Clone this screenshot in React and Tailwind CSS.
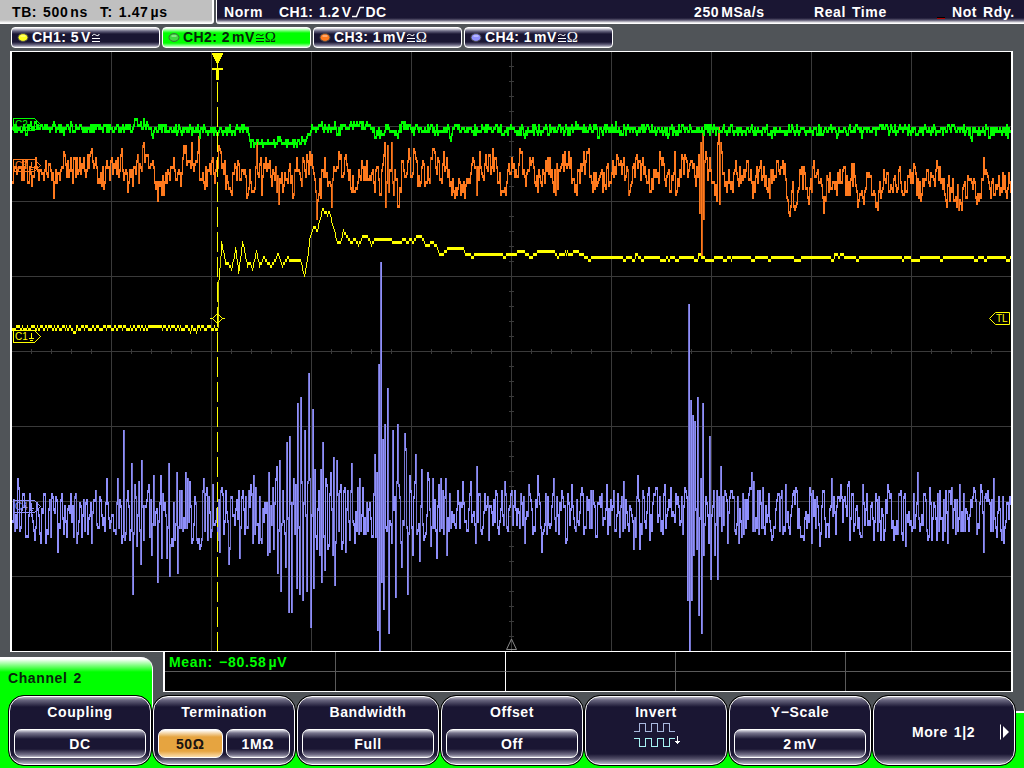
import React from "react";

const PLOT = { x0: 12, x1: 1011 };

// Small deterministic generator so every render draws the same noise floor.
function makeRandom(seed) {
  let s = seed;
  return () => {
    s = (s * 1664525 + 1013904223) % 4294967296;
    return s / 4294967296;
  };
}

const level = (y) => Math.round((y - 2.5) / 3);

// points: [x, y] pairs; fill(x, base, rand) gives the value of a column between them.
function sample(points, fill, seed) {
  const rand = makeRandom(seed);
  const out = [];
  let i = 0;
  for (let x = PLOT.x0; x < PLOT.x1; x++) {
    while (i < points.length - 2 && points[i + 1][0] <= x) i++;
    const [ax, ay] = points[i];
    const [bx, by] = points[i + 1];
    const t = Math.max(0, Math.min(1, (x - ax) / (bx - ax)));
    out.push(level(x === ax ? ay : fill(x, ay + (by - ay) * t, rand)));
  }
  return out;
}

// Quantiser flicker that keeps its value for a few columns.
function makeDither() {
  let left = 0;
  let value = 0;
  return (x, base, rand) => {
    if (x > 217 && x < 475) return base;
    if (left <= 0) {
      const r = rand();
      if (x <= 217) {
        value = value > 0 ? (r < 0.06 ? 3 : -1.5) : 1.5;
        if (x > 148 && x < 162) value = -1.5;
      } else {
        value = r < 0.32 ? 3 : r > 0.96 ? -3 : 0;
      }
      left = value === 0 ? 2 + Math.floor(rand() * 9) : 1 + Math.floor(rand() * 4);
    }
    left -= 1;
    return base + value * (x <= 217 || x > 585 ? 1 : 0.3);
  };
}

function bars(levels, overlap, dimOver) {
  let bright = "";
  let dim = "";
  for (let i = 0; i < levels.length; i++) {
    const cur = levels[i];
    const prev = i ? levels[i - 1] : cur;
    let top = Math.min(cur, prev);
    let bot = Math.max(cur, prev);
    if (!overlap && cur !== prev) {
      if (cur > prev) top += 1;
      else bot -= 1;
    }
    const h = (bot - top + 1) * 3;
    const seg = `M${PLOT.x0 + i} ${top * 3 + 1}h1v${h}h-1z`;
    if (h > dimOver && i % 2 === 0) dim += seg;
    else bright += seg;
  }
  return { bright, dim };
}

const CH1 = [
  [12, 328], [217, 328], [218, 282], [219, 270], [221, 242], [225, 263], [228, 263], [231, 270],
  [235, 248], [238, 272], [242, 242], [247, 266], [249, 262], [252, 269], [256, 251],
  [259, 266], [264, 257], [267, 263], [271, 266], [278, 254], [282, 266], [287, 258],
  [293, 261], [300, 261], [304, 275], [307, 257], [309, 240], [313, 227], [317, 230],
  [322, 209], [327, 215], [329, 212], [332, 225], [337, 242], [340, 242], [343, 231],
  [348, 239], [351, 242], [355, 239], [358, 245], [363, 236], [367, 236], [371, 245],
  [374, 239], [388, 239], [393, 242], [400, 242], [403, 239], [407, 242], [410, 239],
  [413, 242], [416, 236], [421, 236], [425, 245], [433, 243], [437, 248], [439, 254],
  [443, 254], [448, 248], [462, 248], [465, 253], [472, 257], [477, 254], [500, 254],
  [504, 257], [509, 254], [523, 252], [530, 257], [536, 253], [542, 252], [548, 250],
  [554, 252], [557, 257], [561, 254], [567, 252], [569, 255], [575, 251], [580, 254],
  [585, 257.3], [1012, 257.3],
];

const CH2 = [
  [12, 128], [132, 127], [134, 120], [137, 124], [150, 128], [152, 136], [155, 128],
  [230, 130], [243, 125], [247, 129], [249, 140], [265, 142], [290, 142], [303, 140],
  [308, 133], [313, 127], [333, 128], [334, 121], [336, 135], [340, 124], [368, 125],
  [372, 130], [382, 134], [385, 125], [396, 134], [402, 122], [410, 129], [448, 129],
  [449, 138], [452, 128], [522, 129], [524, 137], [527, 128], [596, 129], [597, 138], [599, 129],
  [666, 129], [667, 137], [669, 129], [835, 130], [836, 138], [838, 129], [860, 129], [861, 138],
  [863, 129], [969, 129], [970, 138], [972, 129], [987, 129], [988, 138], [990, 129], [1012, 129],
];

const CH3 = [
  [12, 182], [20, 168], [30, 174], [40, 170], [46, 172], [48, 165], [50, 170], [53, 198], [58, 172],
  [63, 151], [68, 175], [76, 158], [84, 170], [90, 151], [96, 166], [101, 186], [108, 168],
  [116, 172], [121, 148], [124, 172], [128, 183], [133, 168], [140, 166], [143, 142], [146, 154],
  [150, 165], [157, 201], [160, 182], [163, 195], [168, 172], [174, 170], [180, 186],
  [183, 145], [187, 162], [191, 143], [196, 160], [198, 136], [199, 180], [203, 182],
  [210, 173], [217, 168], [218, 145], [222, 165], [230, 192], [234, 164], [240, 178],
  [247, 195], [250, 182], [254, 188], [256, 142], [258, 176], [260, 157], [261, 195],
  [264, 168], [272, 170], [278, 202], [283, 184], [289, 163], [292, 198], [294, 170],
  [304, 171], [307, 160], [311, 155], [313, 172], [316, 217], [318, 195], [320, 198],
  [321, 170], [324, 157], [328, 182], [331, 207], [333, 168], [338, 151], [342, 175],
  [344, 157], [348, 180], [357, 183], [362, 167], [367, 180], [371, 172], [374, 192],
  [377, 168], [379, 193], [382, 165], [384, 142], [385, 205], [387, 145], [388, 190],
  [391, 142], [393, 194], [395, 180], [397, 207], [400, 192], [402, 162], [405, 176],
  [408, 148], [411, 175], [413, 148], [417, 186], [421, 168], [425, 182], [428, 178],
  [431, 157], [434, 152], [437, 157], [440, 180], [443, 151], [447, 175], [453, 190],
  [458, 180], [464, 198], [468, 178], [474, 168], [476, 193], [479, 151], [484, 165],
  [488, 155], [495, 158], [500, 194], [505, 193], [507, 170], [511, 157], [517, 175], [520, 151],
  [525, 185], [529, 158], [532, 158], [537, 190], [543, 172], [547, 157], [553, 190],
  [560, 166], [568, 151], [572, 180], [576, 195], [582, 163], [587, 151], [592, 190],
  [598, 180], [604, 184], [612, 162], [617, 157], [622, 165], [629, 190], [633, 163],
  [638, 160], [643, 172], [650, 192], [655, 170], [662, 157], [665, 185], [672, 180], [674, 153],
  [675, 195], [679, 170], [682, 157], [687, 175], [691, 160], [695, 184], [698, 156],
  [699, 213], [700, 142], [701, 253], [702, 130], [703, 219], [704, 160], [705, 151],
  [707, 180], [709, 157], [712, 182], [716, 201], [717, 142], [718, 128], [719, 204],
  [720, 142], [721, 151], [722, 172], [727, 182], [732, 192], [735, 160], [742, 180], [747, 160],
  [752, 198], [758, 170], [760, 160], [766, 188], [775, 175], [782, 160], [785, 178],
  [789, 214], [791, 192], [794, 208], [799, 170], [804, 174], [808, 204], [813, 160], [818, 182],
  [823, 211], [827, 178], [840, 182], [850, 180], [853, 163], [857, 205], [862, 197],
  [869, 175], [876, 204], [884, 178], [891, 188], [898, 170], [906, 190], [913, 163],
  [918, 198], [925, 180], [937, 166], [945, 201], [952, 180], [953, 200], [960, 204],
  [968, 178], [974, 182], [978, 201], [982, 180], [983, 157], [988, 182], [993, 195], [1000, 188],
  [1012, 190],
];

const CH4 = [
  [12, 520], [17, 478], [20, 528], [24, 505], [27, 535], [29, 493], [34, 540], [36, 503],
  [40, 541], [43, 493], [45, 541], [52, 496], [57, 550], [60, 500], [66, 535], [70, 493],
  [73, 535], [75, 493], [76, 543], [79, 502], [84, 530], [86, 500], [91, 543], [94, 500],
  [97, 528], [100, 499], [103, 518], [106, 478], [110, 522], [114, 531], [117, 478],
  [121, 543], [123, 430], [124, 540], [129, 538], [131, 463], [132, 592], [134, 485],
  [136, 544], [138, 482], [140, 562], [141, 460], [143, 540], [146, 500], [148, 485],
  [151, 555], [153, 475], [157, 580], [160, 475], [161, 558], [164, 502], [166, 558],
  [168, 463], [169, 576], [172, 545], [174, 538], [176, 472], [177, 573], [181, 490],
  [184, 527], [185, 472], [189, 482], [193, 525], [197, 543], [201, 540], [202, 490],
  [206, 487], [209, 512], [212, 485], [213, 525], [217, 538], [219, 550], [224, 520],
  [228, 562], [231, 496], [234, 525], [236, 500], [239, 558], [242, 490], [244, 534],
  [248, 490], [251, 495], [252, 543], [253, 475], [256, 525], [258, 541], [261, 541],
  [264, 502], [267, 555], [268, 473], [269, 552], [272, 487], [273, 549], [276, 466],
  [277, 573], [279, 460], [280, 591], [282, 490], [285, 565], [286, 442], [288, 612],
  [289, 436], [291, 612], [293, 480], [295, 484], [296, 588], [297, 403], [299, 594],
  [300, 397], [302, 600], [304, 430], [306, 591], [308, 373], [309, 480], [310, 627],
  [312, 409], [313, 588], [314, 469], [316, 549], [318, 490], [319, 555], [320, 469],
  [321, 582], [322, 442], [324, 570], [325, 478], [327, 549], [330, 472], [332, 555],
  [333, 457], [334, 585], [336, 460], [338, 530], [340, 484], [341, 549], [344, 488],
  [345, 552], [349, 540], [351, 463], [353, 525], [356, 530], [359, 478], [360, 531],
  [363, 534], [367, 530], [369, 502], [371, 537], [373, 495], [374, 454], [375, 537],
  [376, 472], [377, 630], [378, 364], [379, 651], [380, 262], [381, 580], [382, 439],
  [383, 609], [384, 424], [385, 526], [387, 388], [388, 633], [389, 520], [391, 543],
  [392, 430], [393, 510], [395, 597], [397, 424], [399, 496], [401, 567], [404, 433],
  [405, 448], [407, 594], [409, 475], [412, 555], [415, 454], [417, 530], [419, 561],
  [421, 469], [422, 525], [425, 534], [427, 472], [430, 546], [432, 478], [434, 500],
  [436, 558], [438, 485], [440, 478], [441, 528], [445, 478], [446, 555], [449, 493],
  [450, 528], [453, 515], [457, 490], [459, 528], [462, 481], [465, 520], [467, 530],
  [470, 481], [472, 515], [475, 543], [476, 466], [479, 493], [481, 534], [484, 495],
  [488, 540], [490, 505], [492, 523], [496, 495], [500, 510], [504, 481], [507, 530],
  [511, 490], [516, 525], [520, 495], [524, 543], [528, 484], [533, 528], [537, 475],
  [541, 552], [545, 493], [549, 528], [553, 478], [558, 534], [562, 496], [565, 543],
  [571, 484], [575, 530], [580, 493], [585, 528], [590, 490], [595, 536], [599, 498],
  [602, 523], [606, 484], [609, 525], [612, 505], [616, 515], [617, 493], [619, 537],
  [623, 482], [628, 531], [630, 508], [633, 549], [637, 475], [639, 549], [642, 490],
  [645, 528], [648, 487], [649, 540], [653, 493], [656, 487], [660, 531], [664, 484],
  [666, 515], [670, 489], [673, 516], [676, 502], [680, 522], [684, 487], [686, 497],
  [687, 598], [688, 304], [689, 651], [690, 400], [691, 598], [692, 415], [693, 553],
  [694, 421], [696, 549], [697, 397], [698, 615], [700, 478], [701, 633], [702, 403],
  [703, 555], [705, 496], [708, 543], [709, 436], [710, 579], [713, 490], [714, 555],
  [716, 490], [717, 579], [718, 497], [720, 466], [721, 531], [724, 490], [727, 543],
  [729, 496], [734, 531], [737, 496], [738, 543], [741, 537], [742, 493], [745, 528],
  [749, 487], [751, 472], [752, 531], [753, 482], [756, 528], [759, 492], [762, 487],
  [764, 534], [768, 493], [772, 537], [776, 500], [779, 531], [781, 490], [783, 528], [785, 484],
  [788, 528], [792, 493], [795, 487], [798, 510], [802, 537], [806, 528], [809, 487],
  [811, 543], [812, 490], [817, 505], [819, 546], [823, 490], [828, 537], [831, 478],
  [835, 534], [840, 484], [843, 500], [848, 481], [849, 540], [852, 493], [857, 528],
  [860, 537], [862, 484], [865, 510], [870, 505], [873, 540], [876, 500], [880, 540],
  [883, 540], [885, 500], [888, 490], [891, 528], [894, 528], [899, 493], [902, 540],
  [904, 493], [905, 546], [908, 511], [911, 531], [914, 528], [917, 472], [919, 531],
  [925, 499], [928, 537], [929, 487], [931, 540], [934, 505], [936, 540], [939, 490],
  [942, 538], [945, 490], [947, 543], [948, 490], [953, 510], [957, 529], [959, 484],
  [963, 493], [967, 519], [970, 500], [973, 487], [976, 534], [980, 484], [983, 552],
  [985, 493], [988, 500], [992, 531], [993, 478], [995, 528], [998, 496], [1000, 531],
  [1003, 543], [1006, 503], [1009, 496], [1012, 517],
];

const blueFill = (x, base, rand) => {
  const burst = x > 120 && x < 430 ? 30 : 23;
  return base * 0.2 + 514 * 0.8 + (rand() * 2 - 1) * burst;
};

const orangeFill = (x, base, rand) => {
  const centre = x < 560 ? 174 : x < 725 ? 176 : 184;
  return base * 0.7 + centre * 0.3 + (rand() * 2 - 1) * 14;
};

const greenFill = (x, base, rand) => base + 1 + (rand() + rand() - 1) * 6.5;

const TRACES = [
  { levels: sample(CH4, blueFill, 7), overlap: true, dimOver: 30, color: "#8f8ffb", dim: "#7474cc" },
  { levels: sample(CH3, orangeFill, 21), overlap: true, dimOver: 24, color: "#ff7a1e", dim: "#cf5f14" },
  { levels: sample(CH1, makeDither(), 5), overlap: false, dimOver: 10, color: "#ffff00", dim: "#c8c800" },
  { levels: sample(CH2, greenFill, 33), overlap: true, dimOver: 99, color: "#00ff00", dim: "#00c800" },
];

const range = (n) => Array.from({ length: n }, (_, i) => i);

function Tag({ y, color, label }) {
  return (
    <g stroke={color} fill="none" shapeRendering="crispEdges">
      <path d={`M13.5 ${y + 0.5}h21l6 6l-6 6h-21z`} />
      <text x="15" y={y + 10} fill={color} stroke="none" fontSize="10" fontWeight="400" fontFamily="Liberation Sans, sans-serif" letterSpacing="0">
        {label}
      </text>
      <path d={`M31.5 ${y + 3}v5M29 ${y + 8.5}h5M30 ${y + 10.5}h3`} />
    </g>
  );
}

function Plot() {
  return (
    <svg viewBox="10 51 1003 601" className="ml-[10px] block h-[601px] w-[1003px] shrink-0">
      <g shapeRendering="crispEdges">
        <rect x="10" y="51" width="1003" height="601" fill="#fff" />
        <rect x="12" y="52" width="999" height="599" fill="#000" />
        <g fill="#3a3a3a">
          {range(9).map((i) => (
            <rect key={`v${i}`} x={111 + i * 100} y="52" width="1" height="599" />
          ))}
          {range(7).map((i) => (
            <rect key={`h${i}`} x="12" y={126 + i * 75} width="999" height="1" />
          ))}
          {range(39).map((i) => (
            <rect key={`ty${i}`} x="509" y={66 + i * 15} width="5" height="1" />
          ))}
          {range(49).map((i) => (
            <rect key={`tx${i}`} x={31 + i * 20} y="349" width="1" height="5" />
          ))}
        </g>
        {TRACES.map((t) => {
          const d = bars(t.levels, t.overlap, t.dimOver);
          return (
            <g key={t.color}>
              <path d={d.bright} fill={t.color} />
              <path d={d.dim} fill={t.dim} />
            </g>
          );
        })}
        <rect x="12" y="651" width="999" height="1" fill="#fff" />
        <path d="M217.5 82V651" stroke="#ffff00" strokeDasharray="20 5" fill="none" />
        <path d="M212 53h11v2h-1v2h-1v2h-1v2h-1v2h-1v5h5v2h-4v10h-3v-10h-4v-2h5v-5h-1v-2h-1v-2h-1v-2h-1v-2h-1z" fill="#ffff00" />
      </g>
      <g fill="none" stroke="#ffff00">
        <path d="M217.5 313.5l5 5l-5 5l-5 -5z" />
        <path d="M210 318.5h3M222 318.5h3" />
        <path d="M1009.5 312.5h-14l-6 6l6 6h14z" fill="#000" />
        <text x="996" y="322" fill="#ffff00" stroke="none" fontSize="10" fontWeight="400" letterSpacing="0" fontFamily="Liberation Sans, sans-serif">TL</text>
      </g>
      <path d="M511.5 639l-5 10.5h10z" fill="none" stroke="#8a8a8a" />
      <Tag y={118} color="#00ff00" label="C2" />
      <Tag y={159} color="#ff7a1e" label="C3" />
      <Tag y={330} color="#ffff00" label="C1" />
      <Tag y={500} color="#8f8ffb" label="C4" />
    </svg>
  );
}

function Unit({ value, unit }) {
  return (
    <>
      {value}
      <span className="ml-[2px]">{unit}</span>
    </>
  );
}

function TopBar() {
  return (
    <div className="flex h-6 shrink-0 bg-[#505458] leading-6">
      <div className="flex w-[214px] rounded-br-[3px] border-r-2 border-white bg-[linear-gradient(#c0c0c0_20px,#fff_23px)] pl-[12px] text-black">
        <span className="w-[88px]"><Unit value="TB: 500" unit="ns" /></span>
        <span><Unit value="T: 1.47" unit="µs" /></span>
      </div>
      <div className="ml-[2px] flex flex-1 rounded-bl-[3px] border-l border-white bg-[linear-gradient(#1a1633_18px,#57536d_20px,#fff_23px)] pl-[7px]">
        <span className="w-[55px]">Norm</span>
        <span className="flex w-[415px] tracking-[0.4px]">
          <Unit value="CH1: 1.2" unit="V" />
          <svg viewBox="0 0 13 12" className="ml-px mt-[6px] h-3 w-[13px]" fill="none" stroke="#fff" strokeWidth="1.500">
            <path d="M0 10.500h4.500l3.500-9h4" />
          </svg>
          DC
        </span>
        <span className="w-[120px]"><Unit value="250" unit="MSa/s" /></span>
        <span className="w-[123px]">Real Time</span>
        <span className="mt-[17px] mr-[7px] h-[2px] w-[8px] border-b border-[#b00000] bg-black" />
        <span>Not Rdy.</span>
      </div>
    </div>
  );
}

const CHANNELS = [
  { name: "CH1: 5", unit: "V", dot: "#ffff20", ohm: false },
  { name: "CH2: 2", unit: "mV", dot: "#40d840", ohm: true, active: true },
  { name: "CH3: 1", unit: "mV", dot: "#ff7a1e", ohm: true },
  { name: "CH4: 1", unit: "mV", dot: "#9090ff", ohm: true },
];

function ChannelPill({ name, unit, dot, ohm, active }) {
  const look = active
    ? "text-[#08240c] bg-[linear-gradient(#fff_0,#00ff00_5px,#00ff00_15px,#d0ffd0_19px)]"
    : "text-white bg-[linear-gradient(#f4f4f8_0,#6c6984_3px,#1a1633_6px,#1a1633_14px,#6c6984_17px,#fff_20px)]";
  return (
    <div className={`flex h-[21px] w-[149px] items-center rounded-[4px] border border-white pl-[5px] tracking-[0.45px] [word-spacing:0px] ${look}`}>
      <svg viewBox="0 0 12 9" className="h-[9px] w-3">
        <ellipse cx="6" cy="4.500" rx="5" ry="3.900" fill={dot} stroke={active ? "#3c6a3c" : "#4a4a4a"} strokeWidth="1" />
        <path d="M3.500 3h5" stroke="#fff" strokeOpacity="0.7" strokeWidth="1" />
      </svg>
      <span className="ml-[3px]"><Unit value={name} unit={unit} /></span>
      <svg viewBox="0 0 8 9" className="ml-px h-[9px] w-2" fill="none" stroke="currentColor">
        <path d="M0.500 3c0-2 2-2 3.300-1s3.300 1 3.300-1M0 5.500h8M0 8.500h8" />
      </svg>
      {ohm && (
        <span className="ml-px w-3 font-['Liberation_Serif',serif] text-[15px] font-normal tracking-normal leading-none">Ω</span>
      )}
    </div>
  );
}

function Measurements() {
  return (
    <div className="flex h-10 shrink-0">
      <div className="relative z-0 mt-[5px] h-[60px] w-[153px] rounded-tr-[12px] border-r border-white bg-[linear-gradient(#fff_0,#fff_2px,#00ff00_15px)] pl-2 pt-[12px] leading-[18px] text-[#08240c]">
        Channel 2
      </div>
      <div className="ml-[10px] grid w-[850px] grid-cols-[171px_170px_170px_170px_1fr] grid-rows-2 border-b border-l-2 border-r-2 border-b-white border-l-white border-r-white bg-black leading-[20px] text-[#00ff00]">
        <div className="border-r border-b border-[#5a5a5a] pl-1 pt-px leading-[19px] tracking-[0.7px] whitespace-nowrap">
          <Unit value="Mean: −80.58" unit="µV" />
        </div>
        <div className="border-r border-b border-r-white border-b-[#5a5a5a]" />
        <div className="border-r border-b border-[#5a5a5a]" />
        <div className="border-r border-b border-[#5a5a5a]" />
        <div className="border-b border-[#5a5a5a]" />
        <div className="border-r border-[#5a5a5a]" />
        <div className="border-r border-white" />
        <div className="border-r border-[#5a5a5a]" />
        <div className="border-r border-[#5a5a5a]" />
        <div />
      </div>
    </div>
  );
}

function Key({ title, children }) {
  return (
    <div className="relative z-10 h-[71px] w-36 rounded-[16px] border border-black bg-black">
      <div className="flex h-full flex-col rounded-[15px] border-[1.5px] border-white bg-[linear-gradient(#b9b7c6_0,#6a6780_3px,#1a1633_10px,#1a1633_57px,#55516b_62px,#b9b7c6_67px)] px-[4px] pt-[5px] text-center leading-5">
        <span>{title}</span>
        {children}
      </div>
    </div>
  );
}

function Value({ children, active }) {
  const look = active
    ? "text-[#1a1210] bg-[linear-gradient(#fff_0,#e6a440_7px,#e6a440_21px,#ffe8c0_28px)]"
    : "bg-[linear-gradient(#e0e0e8_0,#77748c_3px,#1a1633_9px,#1a1633_19px,#77748c_25px,#e0e0e8_28px)]";
  return (
    <div className={`flex h-[29px] flex-1 items-center justify-center rounded-[7px] border border-white ${look}`}>
      {children}
    </div>
  );
}

function Menu() {
  return (
    <div className="flex h-[76px] shrink-0 bg-[linear-gradient(#505458_19px,#fff_19px,#fff_21px,#00ff00_21px)]">
      <div className="relative z-0 w-2 bg-[#00ff00]" />
      <div className="flex pt-[3px]">
        <Key title="Coupling">
          <div className="mt-[7px] flex"><Value>DC</Value></div>
        </Key>
        <Key title="Termination">
          <div className="mt-[7px] flex gap-[3px]">
            <Value active>50Ω</Value>
            <Value>1MΩ</Value>
          </div>
        </Key>
        <Key title="Bandwidth">
          <div className="mt-[7px] flex"><Value>Full</Value></div>
        </Key>
        <Key title="Offset">
          <div className="mt-[7px] flex"><Value>Off</Value></div>
        </Key>
        <Key title="Invert">
          <svg viewBox="0 0 48 27" className="ml-[44px] h-[27px] w-12" fill="none" shapeRendering="crispEdges">
            <path d="M0 9.500h5.500v-8h6v8h6v-8h6v8h6v-8h6v8h5" stroke="#a9b8de" />
            <path d="M0 16.500h5.500v8h6v-8h6v8h6v-8h6v8h6v-8h5" stroke="#a8f4f4" />
            <path d="M43.500 14v8M41 19.500h5M42 20.500h3" stroke="#fff" />
          </svg>
        </Key>
        <Key title="Y−Scale">
          <div className="mt-[7px] flex"><Value><Unit value="2" unit="mV" /></Value></div>
        </Key>
        <Key>
          <div className="mt-[20px] flex items-center">
            <span className="w-[134px]">More 1|2</span>
            <svg viewBox="0 0 10 16" className="-ml-[9px] h-4 w-[10px] shrink-0">
              <path d="M0.500 0.500v15" stroke="#fff" />
              <path d="M3 2l6 6l-6 6z" fill="#fff" />
            </svg>
          </div>
        </Key>
      </div>
    </div>
  );
}

export default function App() {
  return (
    <div className="flex h-[768px] w-[1024px] flex-col overflow-hidden bg-[#505458] font-['Liberation_Sans',Arial,sans-serif] text-[14px] font-bold tracking-[0.6px] text-white [word-spacing:1.500px]">
      <TopBar />
      <div className="flex h-[27px] shrink-0 gap-[2px] pl-[11px] pt-[3px]">
        {CHANNELS.map((c) => (
          <ChannelPill key={c.name} {...c} />
        ))}
      </div>
      <Plot />
      <Measurements />
      <Menu />
    </div>
  );
}
